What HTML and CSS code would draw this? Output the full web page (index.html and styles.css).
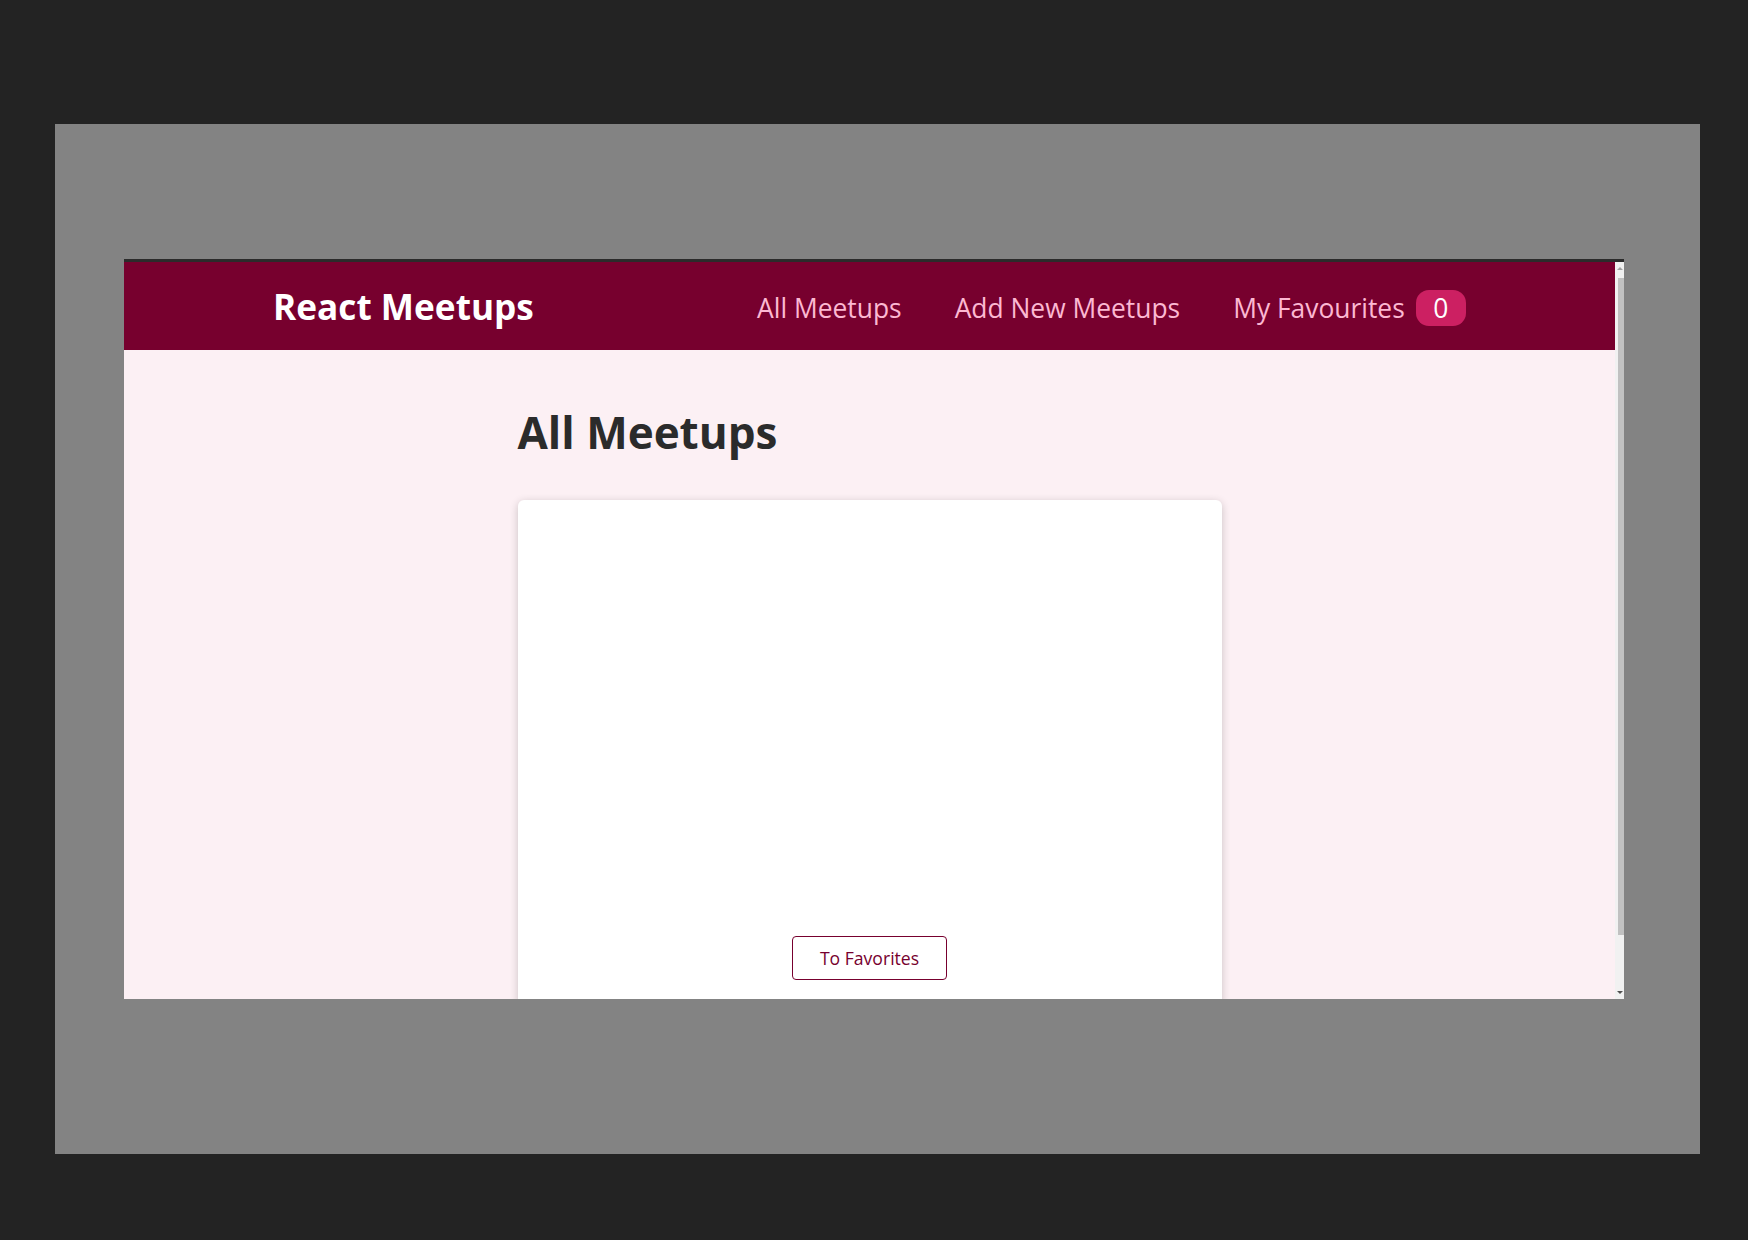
FILE: index.html
```html
<!DOCTYPE html>
<html lang="en">
<head>
<meta charset="utf-8">
<title>React Meetups</title>
<link rel="stylesheet" href="styles.css">
</head>
<body>
<div class="stage">
  <div class="panel">
    <div class="browser">
      <div class="page">
        <header class="header">
          <div class="logo">React Meetups</div>
          <nav>
            <ul class="nav">
              <li><a href="#">All Meetups</a></li>
              <li><a href="#">Add New Meetups</a></li>
              <li><a href="#">My Favourites <span class="badge">0</span></a></li>
            </ul>
          </nav>
        </header>
        <main class="main">
          <h1 class="title">All Meetups</h1>
          <ul class="list">
            <li class="item">
              <div class="card">
                <div class="card-image"></div>
                <div class="actions">
                  <button class="btn">To Favorites</button>
                </div>
              </div>
            </li>
          </ul>
        </main>
      </div>
      <div class="scrollbar">
        <div class="arrow-up"></div>
        <div class="thumb"></div>
        <div class="track-end"><div class="arrow-down"></div></div>
      </div>
    </div>
  </div>
</div>
</body>
</html>
```

FILE: styles.css
```css
html, body {
  margin: 0;
  padding: 0;
}
body {
  background: #232323;
  width: 1748px;
  height: 1240px;
  overflow: hidden;
  font-family: "Open Sans", "Noto Sans", sans-serif;
}
.stage {
  padding: 124px 0 0 55px;
}
.panel {
  width: 1645px;
  height: 1030px;
  background: #838383;
  box-sizing: border-box;
  padding: 135px 76px 0 69px;
}
.browser {
  width: 1500px;
  height: 740px;
  box-sizing: border-box;
  border-top: 3px solid #2b2b2b;
  display: flex;
  overflow: hidden;
}
.page {
  flex: 1;
  background: #fcf0f4;
  overflow: hidden;
}
.header {
  height: 88px;
  background: #77002e;
  display: flex;
  align-items: center;
  justify-content: space-between;
  padding: 0 10%;
}
.logo {
  color: #ffffff;
  font-size: 35.2px;
  font-weight: 700;
}
.nav {
  list-style: none;
  margin: 3px 0 0;
  padding: 0;
  display: flex;
  align-items: baseline;
}
.nav li {
  margin-left: 53px;
}
.nav a {
  text-decoration: none;
  font-size: 26.4px;
  color: #fcb8d2;
}
.badge {
  background: #cc2062;
  color: #ffffff;
  border-radius: 13px;
  padding: 0 17.6px;
  margin-left: 4px;
}
.main {
  width: 704px;
  margin: 52px auto;
}
.title {
  font-size: 44px;
  font-weight: 700;
  color: #2b2b2b;
  margin: 0 0 38px;
}
.list {
  list-style: none;
  margin: 0;
  padding: 0;
}
.card {
  background: #ffffff;
  border-radius: 6px;
  box-shadow: 0 2px 8px rgba(0, 0, 0, 0.2);
}
.card-image {
  height: 410px;
}
.actions {
  padding: 26.4px;
  text-align: center;
}
.btn {
  font-family: inherit;
  font-size: 17.6px;
  color: #77002e;
  background: transparent;
  border: 1px solid #77002e;
  border-radius: 4px;
  padding: 8.8px 26.4px;
  cursor: pointer;
}
.scrollbar {
  width: 9px;
  background: #f1f1f1;
  display: flex;
  flex-direction: column;
  align-items: center;
}
.arrow-up {
  margin-top: 5px;
  width: 0;
  height: 0;
  border-left: 3px solid transparent;
  border-right: 3px solid transparent;
  border-bottom: 3px solid #a3a3a3;
}
.thumb {
  margin-top: 8px;
  width: 6px;
  height: 657px;
  background: #c1c1c1;
  margin-left: 2px;
}
.track-end {
  flex: 1;
  display: flex;
  align-items: flex-end;
  justify-content: center;
  padding-bottom: 5px;
}
.arrow-down {
  width: 0;
  height: 0;
  border-left: 3px solid transparent;
  border-right: 3px solid transparent;
  border-top: 3px solid #505050;
}
```
